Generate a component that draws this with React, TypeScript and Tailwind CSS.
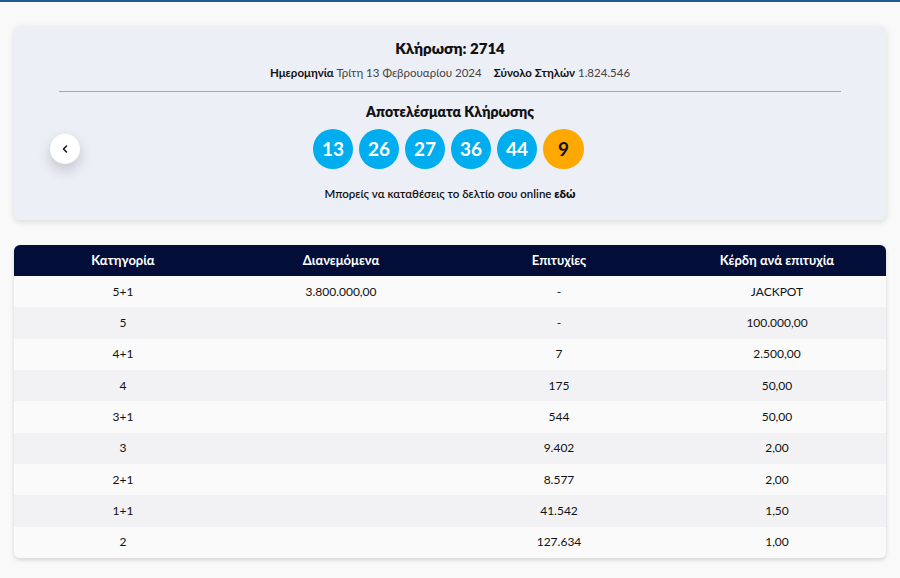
import { ChevronLeft } from 'lucide-react'

const balls = [13, 26, 27, 36, 44]

const rows = [
  ['5+1', '3.800.000,00', '-', 'JACKPOT'],
  ['5', '', '-', '100.000,00'],
  ['4+1', '', '7', '2.500,00'],
  ['4', '', '175', '50,00'],
  ['3+1', '', '544', '50,00'],
  ['3', '', '9.402', '2,00'],
  ['2+1', '', '8.577', '2,00'],
  ['1+1', '', '41.542', '1,50'],
  ['2', '', '127.634', '1,00']
]

export default function App() {
  return (
    <div className="min-h-[578px] bg-[#f9f9f9] border-t-2 border-[#1d5b91] font-['Lato','Noto_Sans',sans-serif] text-[#111]">
      <div className="px-[14px] pt-[24px]">
        <div className="relative rounded-md bg-[#eceff6] shadow-[0_2px_6px_rgba(0,0,0,0.12)] pt-[12px] pb-[18px]">
          <h1 className="text-center text-[15px] font-extrabold leading-[20px]">Κλήρωση: 2714</h1>
          <p className="mt-[7px] text-center text-[11.5px] leading-[16px]">
            <span className="font-bold">Ημερομηνία</span> <span className="text-[#444]">Τρίτη 13 Φεβρουαρίου 2024</span>
            <span className="ml-[12px] font-bold">Σύνολο Στηλών</span> <span className="text-[#444]">1.824.546</span>
          </p>
          <div className="mx-[45px] mt-[10px] border-t border-[#a6a8ad]" />
          <h2 className="mt-[10px] text-center text-[14px] font-extrabold leading-[20px]">Αποτελέσματα Κλήρωσης</h2>
          <div className="mt-[7px] flex justify-center gap-[6px] pr-[3px]">
            {balls.map(n => (
              <div key={n} className="flex h-[40px] w-[40px] items-center justify-center rounded-full bg-[#00adef] text-[19px] font-bold text-white">{n}</div>
            ))}
            <div className="flex h-[40px] w-[41px] items-center justify-center rounded-full bg-[#ffa800] text-[19px] font-bold text-[#111]">9</div>
          </div>
          <p className="mt-[17px] text-center text-[11.5px] font-semibold leading-[16px]">
            Μπορείς να καταθέσεις το δελτίο σου online <span className="font-extrabold">εδώ</span>
          </p>
          <button className="absolute left-[36px] top-[108px] flex h-[30px] w-[30px] items-center justify-center rounded-full bg-white shadow-[0_6px_14px_rgba(0,0,0,0.18)]">
            <ChevronLeft size={12} strokeWidth={3} className="text-[#111]" />
          </button>
        </div>

        <div className="mt-[25px] overflow-hidden rounded-md shadow-[0_2px_4px_rgba(0,0,0,0.15)]">
          <div className="grid h-[31px] grid-cols-4 items-center bg-[#020e38] text-[13px] font-bold text-white">
            <div className="text-center">Κατηγορία</div>
            <div className="text-center">Διανεμόμενα</div>
            <div className="text-center">Επιτυχίες</div>
            <div className="text-center">Κέρδη ανά επιτυχία</div>
          </div>
          {rows.map((r, i) => (
            <div key={r[0]} className={`grid h-[31.33px] grid-cols-4 items-center text-[12px] ${i % 2 ? 'bg-[#f2f2f4]' : 'bg-[#fafafa]'}`}>
              {r.map((c, j) => (
                <div key={j} className="text-center">{c}</div>
              ))}
            </div>
          ))}
        </div>
      </div>
    </div>
  )
}
